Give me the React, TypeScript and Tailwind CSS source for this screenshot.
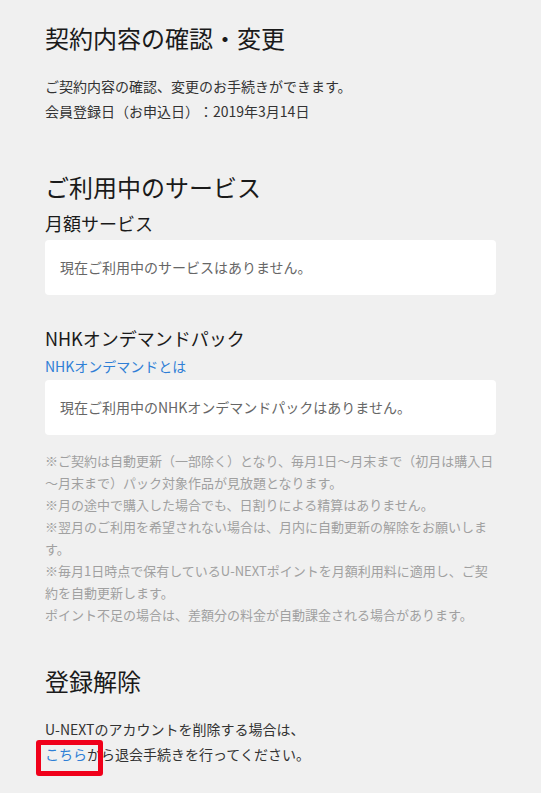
import React from "react";

const notes = [
  "※ご契約は自動更新（一部除く）となり、毎月1日〜月末まで（初月は購入日",
  "〜月末まで）パック対象作品が見放題となります。",
  "※月の途中で購入した場合でも、日割りによる精算はありません。",
  "※翌月のご利用を希望されない場合は、月内に自動更新の解除をお願いしま",
  "す。",
  "※毎月1日時点で保有しているU-NEXTポイントを月額利用料に適用し、ご契",
  "約を自動更新します。",
  "ポイント不足の場合は、差額分の料金が自動課金される場合があります。",
];

const EmptyCard = ({ text }: { text: string }) => (
  <div className="h-[55px] rounded-[4px] bg-white px-[15px] flex items-center text-[14px] leading-[25px] text-[#666]">
    {text}
  </div>
);

const App = () => {
  return (
    <div
      className="min-h-[793px] bg-[#f0f0f0] px-[45px] pt-[22px] pb-[40px] text-[#333] [text-spacing-trim:space-all]"
      style={{ fontFamily: '"Noto Sans CJK JP", "Noto Sans", sans-serif' }}
    >
      {/* contract */}
      <h1 className="text-[24px] leading-[32px] font-normal text-[#1a1a1a]">契約内容の確認・変更</h1>
      <p className="mt-[20px] text-[14px] leading-[25px]">
        ご契約内容の確認、変更のお手続きができます。
        <br />
        会員登録日（お申込日）：2019年3月14日
      </p>

      {/* services */}
      <h2 className="mt-[47px] text-[24px] leading-[32px] font-normal text-[#1a1a1a]">ご利用中のサービス</h2>
      <h3 className="mt-[7px] text-[18px] leading-[26px] font-normal text-[#1a1a1a]">月額サービス</h3>
      <div className="mt-[4px]">
        <EmptyCard text="現在ご利用中のサービスはありません。" />
      </div>

      <h3 className="mt-[30px] text-[18px] leading-[26px] font-normal text-[#1a1a1a]">NHKオンデマンドパック</h3>
      <a href="#" className="mt-[5px] block text-[14px] leading-[20px] text-[#2f7fd6]">
        NHKオンデマンドとは
      </a>
      <div className="mt-[4px]">
        <EmptyCard text="現在ご利用中のNHKオンデマンドパックはありません。" />
      </div>

      <p className="mt-[15px] text-[13px] leading-[22px] text-[#a0a0a0] whitespace-nowrap">
        {notes.map((line, i) => (
          <span key={i} className="block">
            {line}
          </span>
        ))}
      </p>

      {/* unsubscribe */}
      <h2 className="mt-[39px] text-[24px] leading-[32px] font-normal text-[#1a1a1a]">登録解除</h2>
      <p className="mt-[20px] text-[14px] leading-[25px]">
        U-NEXTのアカウントを削除する場合は、
        <br />
        <span className="relative">
          <a href="#" className="text-[#2f7fd6]">
            こちら
          </a>
          <span className="absolute -left-[9px] -top-[4px] w-[67px] h-[36px] border-[5px] border-[#f0001a] rounded-[3px] pointer-events-none" />
        </span>
        から退会手続きを行ってください。
      </p>
    </div>
  );
};

export default App;
